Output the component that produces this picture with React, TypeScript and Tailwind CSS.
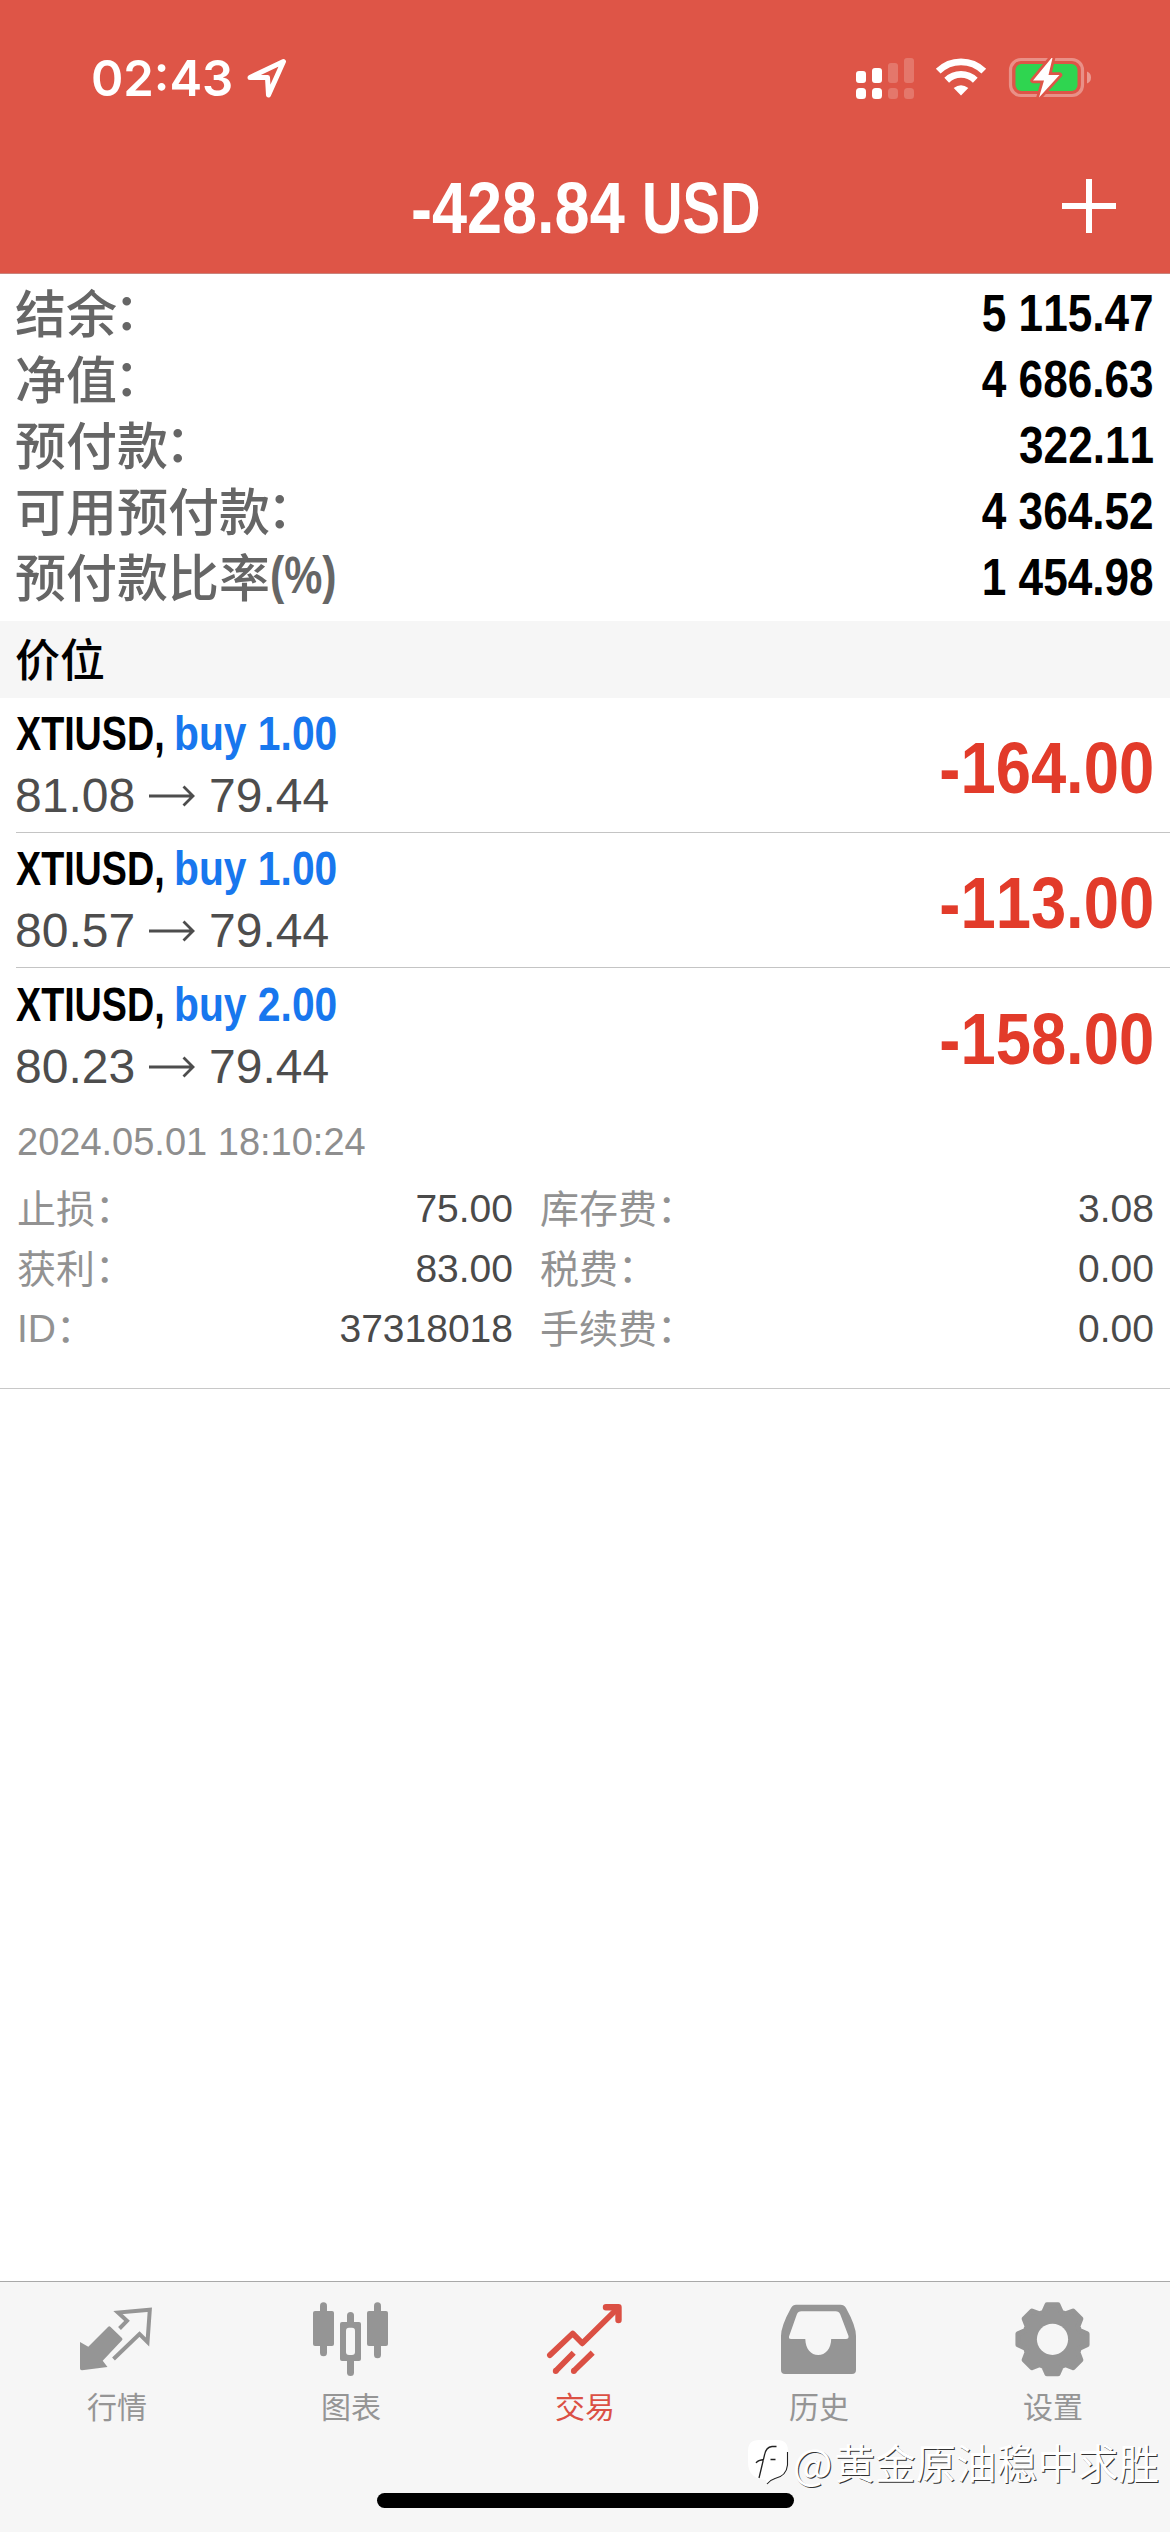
import type { ReactNode } from 'react';

const LATIN = "font-['Liberation_Sans','Noto_Sans_CJK_SC',sans-serif] [font-kerning:none]";
const CJK = "font-['Noto_Sans_CJK_SC',sans-serif]";

const balances = [
  { label: '结余', colon: true, value: '5 115.47' },
  { label: '净值', colon: true, value: '4 686.63' },
  { label: '预付款', colon: true, value: '322.11' },
  { label: '可用预付款', colon: true, value: '4 364.52' },
  { label: '预付款比率', suffix: '(%)', value: '1 454.98' },
];

const positions = [
  { symbol: 'XTIUSD', side: 'buy 1.00', open: '81.08', current: '79.44', profit: '-164.00' },
  { symbol: 'XTIUSD', side: 'buy 1.00', open: '80.57', current: '79.44', profit: '-113.00' },
  { symbol: 'XTIUSD', side: 'buy 2.00', open: '80.23', current: '79.44', profit: '-158.00' },
];

const details = [
  { left: '止损', leftValue: '75.00', right: '库存费', rightValue: '3.08' },
  { left: '获利', leftValue: '83.00', right: '税费', rightValue: '0.00' },
  { left: 'ID', leftValue: '37318018', right: '手续费', rightValue: '0.00' },
];

// Eight rounded teeth around the center
const gearPoints = Array.from({ length: 8 })
  .flatMap((_, i) =>
    [
      [-18, 28.5],
      [-9, 35],
      [9, 35],
      [18, 28.5],
    ].map(([offset, r]) => {
      const a = ((i * 45 + offset) * Math.PI) / 180;
      return `${(41.5 + r * Math.sin(a)).toFixed(2)},${(43.3 - r * Math.cos(a)).toFixed(2)}`;
    })
  )
  .join(' ');

const QuotesIcon = () => (
  <svg viewBox="0 0 84 84" className="w-[84px] h-[84px]" fill="none">
    <path d="M5 46L13.3 50.7L33 31Q34.3 29.6 35.6 31L47 42Q48 43.3 47 44.3L27.7 64.7L32.5 71L7 74.3Q5 74.4 5 72.5Z" fill="currentColor" />
    <path d="M44.5 32.5L52 24.8L43 16.5L74.8 13.8L72.5 46L64.5 38L38.5 63" stroke="currentColor" strokeWidth="4" />
  </svg>
);

const ChartIcon = () => (
  <svg viewBox="0 0 84 84" className="w-[84px] h-[84px]" fill="currentColor">
    <rect x="11" y="6.3" width="7" height="54" rx="3.5" />
    <rect x="4" y="15" width="21" height="35" rx="2" />
    <rect x="38" y="16" width="7" height="64" rx="3.5" />
    <rect x="31" y="26" width="21" height="39" rx="2" />
    <rect x="37" y="31.7" width="9" height="27.3" rx="3" fill="#f6f6f6" />
    <rect x="65" y="6.3" width="7" height="56" rx="3.5" />
    <rect x="58" y="15" width="21" height="35" rx="2" />
  </svg>
);

const TradeIcon = () => (
  <svg viewBox="0 0 84 84" className="w-[84px] h-[84px]" fill="none" stroke="currentColor" strokeWidth="5.8">
    <path d="M6.9 59.2L29.7 37.5L39.3 47.3L75 12" strokeLinecap="round" strokeLinejoin="round" />
    <path d="M63 11.3H75.5V24" strokeWidth="6.4" strokeLinecap="round" strokeLinejoin="round" />
    <path d="M30.7 56.7L12.7 75M49.7 56.7L30.8 75" />
    <circle cx="12.7" cy="75" r="2.9" fill="currentColor" stroke="none" />
    <circle cx="30.8" cy="75" r="2.9" fill="currentColor" stroke="none" />
  </svg>
);

const HistoryIcon = () => (
  <svg viewBox="0 0 84 84" className="w-[84px] h-[84px]" fill="currentColor">
    <path
      fillRule="evenodd"
      d="M19 8.7H63.5Q67 8.7 69 12Q79 30 79 40V74Q79 78 75 78H8Q4 78 4 74V40Q4 30 14 12Q16 8.7 19 8.7ZM24.5 15.3Q21 15.3 19.8 18.5L12 40.5Q11.5 43 14 43H28.3C28.5 53 34 59 41.2 59S54 53 54.2 43H69Q72 43 71.5 40L63.3 18.5Q62 15.3 58.5 15.3Z"
    />
  </svg>
);

const SettingsIcon = () => (
  <svg viewBox="0 0 84 84" className="w-[84px] h-[84px]">
    <polygon points={gearPoints} fill="currentColor" stroke="currentColor" strokeWidth="5" strokeLinejoin="round" />
    <circle cx="41.5" cy="43.3" r="15.6" fill="#f6f6f6" />
  </svg>
);

const tabs = [
  { label: '行情', icon: <QuotesIcon /> },
  { label: '图表', icon: <ChartIcon /> },
  { label: '交易', icon: <TradeIcon />, active: true },
  { label: '历史', icon: <HistoryIcon /> },
  { label: '设置', icon: <SettingsIcon /> },
];

const StatusBar = () => (
  <div className="flex items-center justify-between h-[156px] pl-[91px] pr-[78px]">
    <div className="flex items-center">
      <span className="w-[155px] font-['Inter',sans-serif] text-[50px] leading-none font-semibold whitespace-nowrap">
        <span className="inline-block origin-left scale-x-[0.98]">02:43</span>
      </span>
      <svg viewBox="0 0 42 42" className="w-[42px] h-[42px]" fill="none" stroke="currentColor" strokeWidth="5" strokeLinejoin="round">
        <path d="M4 20.5L37.5 4.5L22.5 38L21.5 20.5Z" />
      </svg>
    </div>
    <div className="flex items-center">
      <svg viewBox="0 0 58 42" className="w-[58px] h-[42px] mr-[21px]" fill="currentColor">
        <rect x="0" y="14" width="10" height="12" rx="3" />
        <rect x="16" y="11" width="10" height="15" rx="3" />
        <rect x="32" y="6" width="10" height="20" rx="3" opacity=".2" />
        <rect x="48" y="1" width="10" height="25" rx="3" opacity=".2" />
        <rect x="0" y="31" width="10" height="11" rx="3.5" />
        <rect x="16" y="31" width="10" height="11" rx="3.5" />
        <rect x="32" y="31" width="10" height="11" rx="3.5" opacity=".2" />
        <rect x="48" y="31" width="10" height="11" rx="3.5" opacity=".2" />
      </svg>
      <svg viewBox="0 0 52 42" className="w-[52px] h-[42px] mr-[21px]" fill="none" stroke="currentColor" strokeWidth="6.8">
        <path d="M3.2 14.2A32.5 32.5 0 0 1 48.8 14.2" />
        <path d="M11.7 23.2A20.5 20.5 0 0 1 40.3 23.2" />
        <path d="M18.7 31Q26 25.5 33.3 31L26 38.6Z" fill="currentColor" stroke="none" />
      </svg>
      <svg viewBox="0 0 84 44" className="w-[84px] h-[44px]">
        <rect x="2.5" y="3.5" width="72" height="36" rx="10.5" fill="none" stroke="#fff" strokeOpacity=".35" strokeWidth="3.2" />
        <path d="M79 15.5Q83 17 83 21.5T79 27.5Z" fill="#fff" fillOpacity=".4" />
        <rect x="7.5" y="8" width="62" height="27" rx="6" fill="#2fd550" />
        <path
          d="M43.5 2L25 24.5H36L31 41.5L51.5 19H40.5L44.5 2Z"
          fill="#fff"
          stroke="#de5547"
          strokeWidth="5.5"
          strokeLinejoin="round"
          paintOrder="stroke"
        />
      </svg>
    </div>
  </div>
);

const Header = () => (
  <header className="h-[274px] bg-[#de5547] text-white border-b border-[#c9837b]">
    <StatusBar />
    <div className="grid grid-cols-[1fr_348px_1fr] items-center h-[100px]">
      <span />
      <h1 className={`flex pt-[3px] ${LATIN} text-[72px] leading-none font-bold whitespace-nowrap`}>
        <span className="w-[231px]">
          <span className="inline-block origin-left scale-x-[0.875]">-428.84</span>
        </span>
        <span className="w-[117px]">
          <span className="inline-block origin-left scale-x-[0.78]">USD</span>
        </span>
      </h1>
      <svg viewBox="0 0 54 54" className="w-[54px] h-[54px] justify-self-end mr-[54px]" stroke="currentColor" strokeWidth="6">
        <path d="M27 0V54M0 27H54" />
      </svg>
    </div>
  </header>
);

const Balances = () => (
  <section className="h-[347px] pt-[6px] pl-[15px] pr-4">
    {balances.map((row) => (
      <div key={row.label} className="flex items-center justify-between h-[66px]">
        <span className={`flex items-center pb-[4px] ${CJK} text-[51px] leading-none font-medium text-[#666] whitespace-nowrap`}>
          {row.label}
          {row.colon && <span className="-ml-[3px] pb-[6px]">：</span>}
          {row.suffix && (
            <span className={`inline-block origin-left scale-x-[0.84] ${LATIN} font-bold`}>{row.suffix}</span>
          )}
        </span>
        <span className={`${LATIN} inline-block origin-right scale-x-[0.865] text-[51px] leading-none font-bold text-black`}>
          {row.value}
        </span>
      </div>
    ))}
  </section>
);

const Arrow = () => (
  <svg viewBox="0 0 46 22" className="w-[46px] h-[22px]" fill="none" stroke="currentColor" strokeWidth="2.8">
    <path d="M0 11H44M34.5 1.5L44 11L34.5 20.5" />
  </svg>
);

const Position = ({ item, divider }: { item: (typeof positions)[number]; divider: boolean }) => (
  <div className={`flex items-center justify-between h-[135px] ml-4 pr-4 ${divider ? 'border-b border-[#c4c4c4]' : ''} ${LATIN}`}>
    <div>
      <div className="flex text-[48px] leading-[62px] font-bold whitespace-nowrap">
        <span className="w-[158px] text-black">
          <span className="inline-block origin-left scale-x-[0.785]">{item.symbol},</span>
        </span>
        <span className="inline-block origin-left scale-x-[0.85] text-[#1877ee]">{item.side}</span>
      </div>
      <div className="flex items-center text-[48px] leading-[62px] text-[#4d4d4d]">
        <span className="w-[133px] -ml-px mr-px">{item.open}</span>
        <Arrow />
        <span className="ml-[14px]">{item.current}</span>
      </div>
    </div>
    <span className="inline-block pt-[6px] origin-right scale-x-[0.88] text-[72px] leading-none font-bold text-[#e23b2a]">
      {item.profit}
    </span>
  </div>
);

const Label = ({ children }: { children: ReactNode }) => (
  <span className={`flex items-center h-[54px] ${CJK} text-[#929292]`}>
    {children}
    <span className="pb-[3px]">：</span>
  </span>
);

const Details = () => (
  <div className={`h-[286px] border-b border-[#c8c8c8] ${LATIN} text-[39px]`}>
    <p className="h-[76px] pl-[17px] pt-[14px] text-[38px] leading-[50px] text-[#8e8e8e]">2024.05.01 18:10:24</p>
    {details.map((row) => (
      <div key={row.left} className="flex h-[60px] pl-[17px] pr-4 leading-[60px] text-[#4a4a4a]">
        <div className="flex justify-between w-[496px]">
          <Label>{row.left === 'ID' ? <span className={`${LATIN} pt-[6px]`}>ID</span> : row.left}</Label>
          <span>{row.leftValue}</span>
        </div>
        <div className="flex flex-1 justify-between ml-[27px]">
          <Label>{row.right}</Label>
          <span>{row.rightValue}</span>
        </div>
      </div>
    ))}
  </div>
);

const Watermark = () => (
  <div className="absolute right-[11px] top-[150px] flex items-center text-white">
    <svg viewBox="0 0 42 48" className="w-[42px] h-[48px] mr-[4px]" fill="none">
      <path d="M12 2H30Q41 2 41 13V26Q41 40 27 41L20 46L19 42Q1 41 1 24V13Q1 2 12 2Z" fill="#fff" />
      <path d="M40.5 14V27Q39.5 38 28 40.5Q23 42 20 46" stroke="#222" strokeWidth="1.1" />
      <path d="M29.5 8.5H25Q19 9 17.5 17L12 40M9 25Q11 22 17 21.5M23.5 21.5H28.5" stroke="#222" strokeWidth="1.3" />
    </svg>
    <span className={`flex ${CJK} text-[40.6px] leading-[60px] whitespace-nowrap [text-shadow:1px_1px_0_#333]`}>
      <span className="mr-[2px] text-[42px]">@</span>
      黄金原油稳中求胜
    </span>
  </div>
);

const TabBar = () => (
  <nav className="relative h-[251px] bg-[#f6f6f6] border-t border-[#a9a9a9]">
    <div className="grid grid-cols-5 pt-[14px]">
      {tabs.map((tab) => (
        <div key={tab.label} className={`flex flex-col items-center ${tab.active ? 'text-[#db5044]' : 'text-[#959595]'}`}>
          {tab.icon}
          <span className={`${CJK} mt-[5px] text-[30px] leading-[40px]`}>{tab.label}</span>
        </div>
      ))}
    </div>
    <div className="absolute left-[377px] top-[211px] w-[417px] h-[15px] rounded-full bg-black" />
    <Watermark />
  </nav>
);

export default function App() {
  return (
    <div className="flex flex-col w-[1170px] h-[2532px] bg-white overflow-hidden">
      <Header />
      <Balances />
      <h2 className={`h-[77px] px-[15px] bg-[#f6f6f6] ${CJK} text-[45px] leading-[74px] font-medium text-black`}>价位</h2>
      <main className="flex-1">
        {positions.map((item, i) => (
          <Position key={i} item={item} divider={i < positions.length - 1} />
        ))}
        <Details />
      </main>
      <TabBar />
    </div>
  );
}
